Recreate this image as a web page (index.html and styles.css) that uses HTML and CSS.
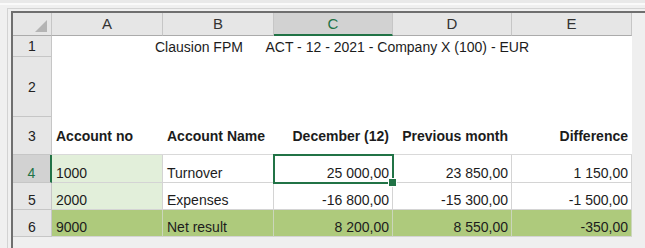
FILE: index.html
```html
<!DOCTYPE html>
<html lang="en">
<head>
    <meta charset="UTF-8">
    <meta name="viewport" content="width=device-width, initial-scale=1.0">
    <title>Clausion FPM - Report</title>
    <link rel="stylesheet" href="styles.css">
</head>
<body>
    <div class="frame">
        <div class="sheet">
            <div class="grid">
                <!-- column headers -->
                <div class="corner">
                    <svg width="12" height="12" viewBox="0 0 12 12"><polygon points="12,0 12,12 0,12" fill="#b4b4b4"/></svg>
                </div>
                <div class="col-head">A</div>
                <div class="col-head">B</div>
                <div class="col-head active">C</div>
                <div class="col-head">D</div>
                <div class="col-head">E</div>

                <!-- report title -->
                <div class="row-head mid">1</div>
                <div class="title">Clausion FPM      ACT - 12 - 2021 - Company X (100) - EUR</div>

                <div class="row-head mid">2</div>
                <div class="blank"></div>

                <!-- table header -->
                <div class="row-head mid">3</div>
                <div class="th">Account no</div>
                <div class="th">Account Name</div>
                <div class="th num">December (12)</div>
                <div class="th num">Previous month</div>
                <div class="th num">Difference</div>

                <!-- data -->
                <div class="row-head active">4</div>
                <div class="cell acc">1000</div>
                <div class="cell">Turnover</div>
                <div class="cell num sel">25 000,00</div>
                <div class="cell num">23 850,00</div>
                <div class="cell num">1 150,00</div>

                <div class="row-head">5</div>
                <div class="cell acc">2000</div>
                <div class="cell">Expenses</div>
                <div class="cell num">-16 800,00</div>
                <div class="cell num">-15 300,00</div>
                <div class="cell num">-1 500,00</div>

                <div class="row-head">6</div>
                <div class="cell total">9000</div>
                <div class="cell total">Net result</div>
                <div class="cell total num">8 200,00</div>
                <div class="cell total num">8 550,00</div>
                <div class="cell total num">-350,00</div>
            </div>
        </div>
    </div>
</body>
</html>
```

FILE: styles.css
```css
* {
    box-sizing: border-box;
}

body {
    margin: 0;
    width: 645px;
    height: 248px;
    overflow: hidden;
    font-family: "Liberation Sans", Arial, sans-serif;
    font-size: 14px;
    line-height: 16px;
    color: #1c1c1c;
    background: linear-gradient(#e9e9e9 0 3px, #fafafa 3px 5px, #f0f0f0 5px);
}

.frame {
    margin: 8px 0 0 7px;
    height: 240px;
    padding: 2px 0 0 3px;
    border-top: 1px solid #d3d3d3;
    border-left: 1px solid #d3d3d3;
    background: #f0f0f0;
}

.sheet {
    height: 100%;
    border-top: 2px solid #6f6f6f;
    border-left: 2px solid #6f6f6f;
    background: #efefef;
}

.grid {
    display: grid;
    grid-template-columns: 39px 111px 111px 119px 119px 120px;
    grid-template-rows: 23px 21px 60px 38px 28px 27px 27px;
    width: 619px;
}

/* headers */
.corner {
    display: flex;
    align-items: flex-end;
    justify-content: flex-end;
    padding: 0 4px 3px 0;
    background: #e6e6e6;
    border-right: 1px solid #c6c6c6;
    border-bottom: 1px solid #ababab;
}

.col-head {
    display: flex;
    align-items: center;
    justify-content: center;
    background: #e6e6e6;
    color: #333;
    font-size: 15px;
    border-right: 1px solid #c6c6c6;
    border-bottom: 1px solid #ababab;
}

.col-head.active {
    background: #d2d2d2;
    color: #217346;
    border-bottom: 2px solid #217346;
}

.row-head {
    display: flex;
    align-items: flex-end;
    justify-content: center;
    padding-bottom: 1px;
    background: #e6e6e6;
    color: #222;
    border-right: 1px solid #c6c6c6;
    border-bottom: 1px solid #c6c6c6;
}

.row-head.mid {
    align-items: center;
    padding-bottom: 0;
}

.row-head.active {
    background: #d2d2d2;
    color: #217346;
    border-right: 2px solid #217346;
}

/* report title area */
.title {
    grid-column: span 5;
    display: flex;
    align-items: center;
    justify-content: center;
    white-space: pre;
    background: #fff;
}

.blank {
    grid-column: span 5;
    background: #fff;
}

.th {
    display: flex;
    align-items: center;
    padding: 0 4px;
    font-weight: bold;
    background: #fff;
    border-bottom: 1px solid #d9d9d9;
}

/* data cells */
.cell {
    display: flex;
    align-items: flex-end;
    padding: 0 3px 1px 4px;
    background: #fff;
    border-right: 1px solid #d4d4d4;
    border-bottom: 1px solid #d4d4d4;
}

.num {
    justify-content: flex-end;
}

.cell.acc {
    background: #e2efda;
}

.cell.total {
    background: #aeca7c;
    border-right-color: #cbd6bb;
    border-bottom-color: #d4d4d4;
}

.cell.sel {
    position: relative;
}

.cell.sel::after {
    content: "";
    position: absolute;
    top: -1px;
    left: -1px;
    right: -2px;
    bottom: -2px;
    border: 2px solid #217346;
}

.cell.sel::before {
    content: "";
    position: absolute;
    right: -5px;
    bottom: -5px;
    width: 7px;
    height: 7px;
    background: #217346;
    border: 1px solid #fff;
    z-index: 1;
}
```
